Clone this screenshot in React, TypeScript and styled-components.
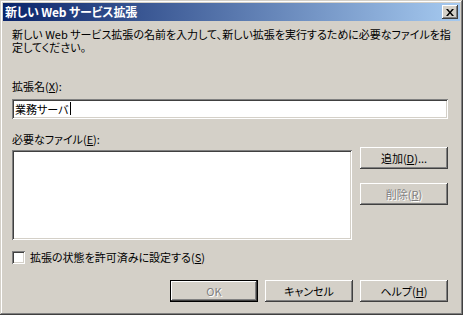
import React from 'react'
import styled, { createGlobalStyle } from 'styled-components'

const face = '#d4d0c8'

const GlobalStyle = createGlobalStyle`
  html, body {
    margin: 0;
    padding: 0;
    background: ${face};
  }
  body {
    font-family: "Noto Sans CJK JP", "Liberation Sans", sans-serif;
    font-size: 11px;
    font-feature-settings: "palt";
    color: #000;
  }
`

const Window = styled.div`
  width: 463px;
  height: 315px;
  box-sizing: border-box;
  background: ${face};
  padding: 3px;
  display: flex;
  flex-direction: column;
  box-shadow: inset -1px -1px #404040, inset 1px 1px ${face},
    inset -2px -2px #808080, inset 2px 2px #fff;
`

const TitleBar = styled.div`
  height: 18px;
  flex-shrink: 0;
  display: flex;
  align-items: center;
  justify-content: space-between;
  padding: 0 2px 0 2px;
  background: linear-gradient(to right, #0a246a, #a6caf0);
`

const TitleText = styled.div`
  color: #fff;
  font-weight: bold;
  font-size: 12px;
  line-height: 18px;
  white-space: nowrap;
  letter-spacing: -0.2px;
`

const CloseButton = styled.div`
  width: 16px;
  height: 14px;
  box-sizing: border-box;
  background: ${face};
  display: flex;
  align-items: center;
  justify-content: center;
  box-shadow: inset -1px -1px #404040, inset 1px 1px #fff,
    inset -2px -2px #808080, inset 2px 2px ${face};
`

const Content = styled.div`
  flex: 1;
  display: flex;
  flex-direction: column;
  padding: 7px 12px 0 9px;
`

const Description = styled.div`
  line-height: 13px;
  white-space: nowrap;
`

const Label = styled.div<{ top: number }>`
  margin-top: ${({ top }) => top}px;
  line-height: 14px;
  white-space: nowrap;
`

const U = styled.span`
  text-decoration: underline;
  text-underline-offset: 1px;
`

const Field = styled.div`
  margin-top: 6px;
  width: 436px;
  height: 20px;
  box-sizing: border-box;
  background: #fff;
  padding: 3px 0 0 3px;
  line-height: 14px;
  display: flex;
  align-items: flex-start;
  white-space: nowrap;
  box-shadow: inset 1px 1px #808080, inset -1px -1px #fff,
    inset 2px 2px #404040, inset -2px -2px ${face};
`

const Caret = styled.span`
  display: inline-block;
  width: 1px;
  height: 13px;
  background: #000;
  margin-left: 1px;
`

const FilesRow = styled.div`
  margin-top: 1px;
  display: flex;
  gap: 8px;
`

const ListBox = styled.div`
  width: 340px;
  height: 90px;
  margin-top: 3px;
  box-sizing: border-box;
  background: #fff;
  box-shadow: inset 1px 1px #808080, inset -1px -1px #fff,
    inset 2px 2px #404040, inset -2px -2px ${face};
`

const SideButtons = styled.div`
  display: flex;
  flex-direction: column;
  gap: 14px;
`

const Button = styled.div<{ disabled?: boolean; primary?: boolean }>`
  width: 88px;
  height: 22px;
  box-sizing: border-box;
  display: flex;
  align-items: center;
  justify-content: center;
  white-space: nowrap;
  background: ${face};
  color: ${({ disabled }) => (disabled ? '#808080' : '#000')};
  text-shadow: ${({ disabled }) => (disabled ? '1px 1px 0 #fff' : 'none')};
  border: ${({ primary }) => (primary ? '1px solid #000' : 'none')};
  box-shadow: inset -1px -1px #404040, inset 1px 1px #fff,
    inset -2px -2px #808080, inset 2px 2px ${face};
`

const CheckRow = styled.div`
  margin-top: 10px;
  display: flex;
  align-items: center;
  gap: 5px;
  line-height: 14px;
  white-space: nowrap;
`

const CheckBox = styled.div`
  width: 13px;
  height: 13px;
  box-sizing: border-box;
  background: #fff;
  box-shadow: inset 1px 1px #808080, inset -1px -1px #fff,
    inset 2px 2px #404040, inset -2px -2px ${face};
`

const Footer = styled.div`
  margin-top: 16px;
  display: flex;
  justify-content: flex-end;
  gap: 7px;
`

const App = () => {
  return (
    <>
      <GlobalStyle />
      <Window>
        <TitleBar>
          <TitleText>新しい Web サービス拡張</TitleText>
          <CloseButton>
            <svg width="8" height="7" viewBox="0 0 8 7">
              <path d="M0 0h2l2 2.5L6 0h2L5 3.5 8 7H6L4 4.5 2 7H0l3-3.5z" fill="#000" />
            </svg>
          </CloseButton>
        </TitleBar>
        <Content>
          <Description>
            新しい Web サービス拡張の名前を入力して、新しい拡張を実行するために必要なファイルを指
            <br />
            定してください。
          </Description>
          <Label top={25}>
            拡張名(<U>X</U>):
          </Label>
          <Field>
            <span>業務サーバ</span>
            <Caret />
          </Field>
          <Label top={13}>
            必要なファイル(<U>E</U>):
          </Label>
          <FilesRow>
            <ListBox />
            <SideButtons>
              <Button>
                <span>
                  追加(<U>D</U>)...
                </span>
              </Button>
              <Button disabled>
                <span>
                  削除(<U>R</U>)
                </span>
              </Button>
            </SideButtons>
          </FilesRow>
          <CheckRow>
            <CheckBox />
            <span>
              拡張の状態を許可済みに設定する(<U>S</U>)
            </span>
          </CheckRow>
          <Footer>
            <Button primary disabled>
              OK
            </Button>
            <Button>キャンセル</Button>
            <Button>
              <span>
                ヘルプ(<U>H</U>)
              </span>
            </Button>
          </Footer>
        </Content>
      </Window>
    </>
  )
}

export default App
